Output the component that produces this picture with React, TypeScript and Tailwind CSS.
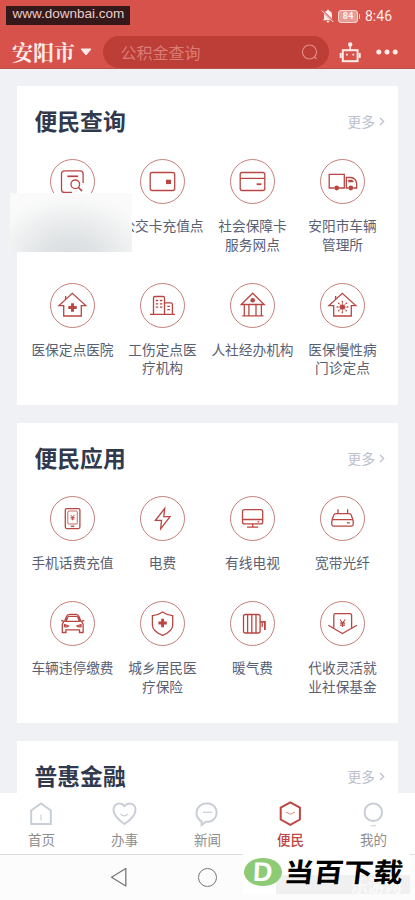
import type { ReactNode } from "react";

const House = () => (
  <path d="M13.7 22.6H9L22.3 10.3 35.8 22.6H31.3V33H13.7ZM15.6 16.5v-3.6" />
);
const Cross = ({ x, y }: { x: number; y: number }) => (
  <path d={`M${x - 4.2} ${y}h8.4M${x} ${y - 4.2}v8.4`} strokeWidth="2.9" />
);
const Yen = ({ x, y, s }: { x: number; y: number; s: number }) => (
  <g transform={`translate(${x} ${y}) scale(${s})`} strokeWidth="1.1">
    <path d="M-2.5-3.5 0-.2 2.5-3.5M0-.2V3.6M-2.4 0H2.4M-2.4 1.8H2.4" />
  </g>
);

const icons: Record<string, ReactNode> = {
  search: (
    <>
      <path d="M22 33.5h-7.5a3 3 0 0 1-3-3V14.8a3 3 0 0 1 3-3h15.600a3 3 0 0 1 3 3V24" />
      <path d="M17.300 17.300H28.200" strokeWidth="1.700" />
      <circle cx="25.300" cy="25.300" r="4.300" />
      <path d="m28.500 28.500 3.600 3.600" strokeWidth="1.600" />
    </>
  ),
  wallet: (
    <>
      <rect x="10.200" y="13.500" width="24.500" height="18" rx="2" />
      <rect x="26" y="20.700" width="5" height="4.400" fill="currentColor" stroke="none" />
    </>
  ),
  card: (
    <>
      <rect x="10.200" y="13.500" width="24.600" height="18" rx="2" />
      <path d="M10.200 19.400h24.600" />
      <path d="M26.700 25.200h4.600" strokeWidth="1.800" />
    </>
  ),
  truck: (
    <>
      <path d="M14.500 29H9.200V15.400H24.300V29H18.800M28.500 29h-2.200V18.500h4.800c3 .5 5.300 3.300 5.600 6.500v4h-3.600" />
      <path d="M28.300 21h3.800l1.500 2h-5.300Z" fill="currentColor" strokeWidth=".5" />
      <circle cx="16.700" cy="29" r="2.400" fill="currentColor" stroke="none" />
      <circle cx="30.800" cy="29" r="2.400" fill="currentColor" stroke="none" />
    </>
  ),
  hospital: (
    <>
      <House />
      <Cross x={22.5} y={24.5} />
    </>
  ),
  buildings: (
    <>
      <path d="M13.500 31V15q0-1.500 1.500-1.500h8q1.500 0 1.500 1.500V31M24.500 19.800h6.400q1.500 0 1.500 1.500V31M10 31.300H35" />
      <path d="M15.800 17.500h2.400M19.900 17.500h2.400M15.800 20.800h2.400M19.900 20.800h2.400M15.800 24.100h2.400M19.900 24.100h2.400M27.300 23.400h2.600M27.300 26.600h2.600" />
    </>
  ),
  bank: (
    <>
      <path d="M11.300 21.500 22.700 10.200 34.200 21.500ZM12.300 32.800H33.500M14.300 21.500v11.300M18.900 21.500v11.300M26 21.500v11.300M31.400 21.500v11.300" />
      <circle cx="22.700" cy="17.300" r="2.300" fill="currentColor" stroke="none" />
    </>
  ),
  virus: (
    <>
      <House />
      <circle cx="22.400" cy="24" r="2.600" fill="currentColor" stroke="none" />
      <path d="M22.400 18.800v10.400M17.300 24h10.300M18.800 20.300l7.300 7.300M26.100 20.300l-7.300 7.300" strokeWidth=".7" />
      <path d="M22.400 18.600v.1M22.400 29.300v.1M17.200 24h.1M27.700 24h.1M18.700 20.200h.1M26.200 20.200h.1M18.700 27.800h.1M26.200 27.800h.1" strokeWidth="1.500" strokeLinecap="round" />
    </>
  ),
  phone: (
    <>
      <rect x="15.300" y="12.600" width="14.600" height="20" rx="1.500" />
      <rect x="17.800" y="15" width="9.500" height="13" rx=".8" strokeWidth=".8" />
      <path d="M20.800 30.300h3.600" />
      <Yen x={22.6} y={21.5} s={0.8} />
    </>
  ),
  bolt: <path d="M24.700 12.500 15.400 24.300h6.100L20.700 32.800 30 20.600h-6.200Z" />,
  tv: (
    <>
      <rect x="12.500" y="13.700" width="20.200" height="14.200" rx="2" />
      <path d="M12.500 23.500h20.200M22.700 28v3M17 31.200h11.200" />
      <path d="M27.600 25.800h1.600" />
    </>
  ),
  router: (
    <>
      <path d="M18 13.300v4.400M27.600 13.300v4.400M12 23.800l2-5q.5-1.200 1.800-1.200h13.500q1.300 0 1.700 1.200l2 5" />
      <rect x="11.800" y="23.700" width="21.400" height="6.400" rx="1.500" />
      <path d="M27 26.800h2.800" />
    </>
  ),
  car: (
    <>
      <path d="M14.500 20.500l2-5q.8-2.100 3-2.100h6.500q2.200 0 3 2.100l2 5M11.200 19.300l2.700 1.100-1.600 2.800v8.300h3.600v-2.600h13.600v2.600h3.600v-8.300l-1.600-2.800 2.700-1.100M16 20.400h13.500l-1.500-4q-.4-1.100-1.600-1.100h-7.200q-1.200 0-1.600 1.100Z" />
      <path d="m14.500 23.700 4 1.300q-1.600 1.500-4 .6ZM31 23.700l-4 1.300q1.600 1.500 4 .6Z" />
    </>
  ),
  shield: (
    <>
      <path d="M22.600 10.900c3 2.200 6.500 3.300 10.100 3.700v9.600c0 4.400-5 8-10.100 10.200-5.100-2.200-10.200-5.800-10.200-10.200v-9.600c3.600-.4 7.200-1.500 10.200-3.700Z" />
      <Cross x={22.6} y={22} />
    </>
  ),
  heat: (
    <>
      <rect x="13.500" y="13.500" width="16.600" height="18.500" rx="2" />
      <path d="M17.600 13.500V32M21.800 13.500V32M26 13.500V32" />
      <path d="M30 20.800h4.900v8.300" strokeWidth="1.800" />
      <path d="M32.200 22v4" />
    </>
  ),
  fund: (
    <>
      <path d="M13.800 26.800V14.300q0-1.700 1.700-1.700h14.400q1.700 0 1.700 1.700v12.500M8.300 24.300l14.100 8.300 14.500-8.300" />
      <Yen x={22.6} y={22.2} s={1.05} />
    </>
  ),
};

type Item = [icon: string, ...lines: string[]];

const queries: Item[] = [
  ["search"],
  ["wallet", "公交卡充值点"],
  ["card", "社会保障卡", "服务网点"],
  ["truck", "安阳市车辆", "管理所"],
  ["hospital", "医保定点医院"],
  ["buildings", "工伤定点医", "疗机构"],
  ["bank", "人社经办机构"],
  ["virus", "医保慢性病", "门诊定点"],
];
const apps: Item[] = [
  ["phone", "手机话费充值"],
  ["bolt", "电费"],
  ["tv", "有线电视"],
  ["router", "宽带光纤"],
  ["car", "车辆违停缴费"],
  ["shield", "城乡居民医", "疗保险"],
  ["heat", "暖气费"],
  ["fund", "代收灵活就", "业社保基金"],
];

function Card({ title, items, className }: { title: string; items: Item[]; className: string }) {
  return (
    <section className={`mx-[17px] w-[381px] shrink-0 bg-white ${className}`}>
      <div className="flex h-[73px] items-center justify-between pr-[13px] pb-[2px] pl-[17.500px]">
        <h2 className="text-[22.800px] leading-none font-bold text-[#30394d]">{title}</h2>
        <div className="flex items-center gap-1 text-[13.700px] leading-none text-[#bbc0cc]">
          更多
          <svg width="6" height="9" viewBox="0 0 6 9" fill="none" stroke="currentColor" strokeWidth="1.200">
            <path d="m1 1 3.700 3.500L1 8" />
          </svg>
        </div>
      </div>
      <div className="grid grid-cols-[repeat(4,90px)] gap-y-[28.700px] pl-[10.500px]">
        {items.map(([icon, ...lines]) => (
          <div key={icon} className="flex flex-col items-center">
            <svg width="45" height="45" viewBox="0 0 45 45" fill="none" stroke="currentColor" strokeWidth="1.300" className="text-[#b84743]">
              <circle cx="22.500" cy="22.500" r="22" strokeWidth=".9" stroke="#bf716c" />
              {icons[icon]}
            </svg>
            <div className="mt-[12.200px] mb-[.8px] text-center text-[13.700px] leading-[18.500px] whitespace-nowrap text-[#586073]">
              {lines.map((l) => (
                <div key={l}>{l}</div>
              ))}
            </div>
          </div>
        ))}
      </div>
    </section>
  );
}

const tabs: { label: string; icon: ReactNode }[] = [
  {
    label: "首页",
    icon: (
      <>
        <path d="M3.200 23V9.500L13 2.500l9.800 7V23Z" />
        <path d="M13 13.500v6" strokeWidth="1.100" />
      </>
    ),
  },
  {
    label: "办事",
    icon: (
      <>
        <path d="M13.500 23C9 20 2.500 14.500 2.500 8.800 2.500 2.500 9.500.5 13.500 5c4-4.500 11-2.500 11 3.800 0 5.700-6.500 11.200-11 14.200Z" />
        <path d="M9.500 12.800q4 4.200 7.500 0" strokeWidth="1.200" />
      </>
    ),
  },
  {
    label: "新闻",
    icon: (
      <>
        <path d="M7.600 20.300C4.500 18.700 2.500 15.600 2.500 12A9.500 9.500 0 0 1 12 2.500h3A9.300 9.300 0 0 1 15 20.800h-3L7.600 24Z" />
        <path d="M9 11.300h9" strokeWidth="1.200" />
      </>
    ),
  },
  {
    label: "便民",
    icon: (
      <>
        <path d="m13.300 1.300 9.600 5.400v11.800l-9.600 5.400-9.600-5.400V6.700Z" />
        <path d="m9 11 4.400 2.200L18 11" strokeWidth=".9" opacity=".7" />
      </>
    ),
  },
  {
    label: "我的",
    icon: (
      <>
        <circle cx="13.300" cy="11.300" r="8.800" />
        <path d="M10.800 24.700h5" strokeWidth="1.100" />
      </>
    ),
  },
];

export default function App() {
  return (
    <div className="relative flex h-[900px] w-[415px] flex-col overflow-hidden bg-[#f0f1f5] font-['Noto_Sans_CJK_SC',sans-serif]">
      <header className="h-[69px] shrink-0 border-b border-[#b9514d] bg-[#d6524b] text-[#ffebe8]">
        <div className="flex h-9 items-start justify-between pl-1.5">
          <div className="mt-1.5 flex h-[19px] w-[124px] items-center bg-[#35191a] pb-[3px] pl-[6.500px] font-['Liberation_Sans',sans-serif] text-[13.500px] leading-none text-[#e9cdca]">
            www.downbai.com
          </div>
          <div className="mt-[8px] flex h-4 items-center pr-[23px]">
            <svg width="14" height="14" viewBox="0 0 14 14" className="mr-[3px]">
              <path d="M3 10V6q0-3.600 3-4.200V.8h2v1Q11 2.400 11 6v4l1.200 1.200H1.800ZM5.500 12h3q-.3 1.500-1.500 1.500T5.500 12" fill="#ffebe8" />
              <path d="m1.200 1.500 11.500 11.500" stroke="#d6524b" strokeWidth="2" />
              <path d="m.8 1.500 11.500 11.500" stroke="#ffebe8" />
            </svg>
            <div className="flex h-[13px] w-[20px] items-center justify-center rounded-[3px] border border-[#ffd8d3] bg-[#e79b95] font-['Roboto',sans-serif] text-[9.500px] leading-none font-bold">84</div>
            <div className="ml-[1px] h-[5px] w-[1px] bg-[#ffd8d3]" />
            <div className="ml-[5px] font-['Roboto',sans-serif] text-[14px] leading-none">8:46</div>
          </div>
        </div>
        <div className="flex h-8 items-center">
          <div className="ml-3 w-[63px] pb-[2px] font-['Noto_Serif_CJK_SC','Noto_Sans_CJK_SC',serif] text-[21px] leading-none font-bold whitespace-nowrap">安阳市</div>
          <svg width="12" height="8" viewBox="0 0 12 8" className="ml-[4.500px]">
            <path d="M1 1h10L6 7Z" fill="#ffebe8" stroke="#ffebe8" strokeLinejoin="round" />
          </svg>
          <div className="ml-[11px] flex h-8 w-[226px] items-center justify-between rounded-l-full rounded-r-full bg-[#bd3d37] pr-[11px] pl-[18px] text-[16px] leading-none text-[#d97c76]">
            <span className="pb-px">公积金查询</span>
            <svg width="17" height="17" viewBox="0 0 17 17" fill="none" stroke="#e5928c" strokeWidth="1.100">
              <circle cx="8.500" cy="8" r="7" />
              <path d="m13.500 13 2 2" />
            </svg>
          </div>
          <svg width="22" height="21" viewBox="0 0 22 21" fill="none" stroke="#ffebe8" className="ml-[10px]">
            <circle cx="11.200" cy="2.400" r="2.200" fill="#ffebe8" stroke="none" />
            <path d="M11.200 3v5" strokeWidth="1.500" />
            <rect x="3.800" y="8.200" width="14.800" height="11" strokeWidth="2" />
            <path d="M1.700 11v5M20.700 11v5" strokeWidth="2" />
            <path d="M7 12.700h1.800M13.400 12.700h1.800" strokeWidth="1.800" />
          </svg>
          <svg width="22" height="6" viewBox="0 0 22 6" fill="#ffebe8" className="ml-[15px]">
            <circle cx="2.800" cy="3" r="2.500" />
            <circle cx="11" cy="3" r="2.500" />
            <circle cx="19.200" cy="3" r="2.500" />
          </svg>
        </div>
      </header>

      <main className="flex min-h-0 flex-1 flex-col gap-[18px] overflow-hidden pt-[17px]">
        <Card title="便民查询" items={queries} className="h-[319px]" />
        <Card title="便民应用" items={apps} className="h-[300px]" />
        <Card title="普惠金融" items={[]} className="h-[100px]" />
      </main>

      <div className="absolute top-[193px] left-[10px] h-[59px] w-[122px] bg-[#fafafb] bg-[radial-gradient(ellipse_85px_62px_at_50%_108%,#dadddf_0%,#e0e3e5_30%,#ebedee_60%,#f5f6f6_85%,#fafafb_100%)]" />

      <nav className="flex h-[61px] shrink-0 bg-white">
        {tabs.map(({ label, icon }) => {
          const on = label === "便民";
          return (
            <div key={label} className={`flex flex-1 flex-col items-center pt-2 ${on ? "text-[#bd4642]" : "text-[#c9ced6]"}`}>
              <svg width="27" height="26" viewBox="0 0 27 26" fill="none" stroke="currentColor" strokeWidth="2">
                {icon}
              </svg>
              <span className={`mt-[5px] text-[13.500px] leading-[14px] ${on ? "font-medium" : "text-[#8e8e8e]"}`}>{label}</span>
            </div>
          );
        })}
      </nav>

      <footer className="flex h-[46px] shrink-0 items-start border-t border-[#dedede] bg-[#fcfcfc]">
        <svg width="18" height="21" viewBox="0 0 18 21" fill="none" stroke="#777" strokeWidth="1.300" className="mt-[12px] ml-[110px]">
          <path d="M15.800 1.500v17.500L1.500 10.300Z" strokeLinejoin="round" />
        </svg>
        <div className="mt-[13px] ml-[70px] size-[19px] rounded-full border border-[#777]" />
      </footer>

      <div className="absolute top-[854px] left-[243px] flex h-[40px] w-[167px] items-start bg-white">
        <div className="absolute right-0 bottom-0 flex h-[19px] w-[134px] items-end justify-end bg-[#f0f0f0] pr-2 text-[17px] leading-[18px] font-bold text-[#fafafa]">
          乐游网
        </div>
        <div className="relative mt-[4px] ml-[1px] flex h-[28px] w-[38px] shrink-0 items-center justify-center rounded-[50%] bg-[#8dcb76] font-['Liberation_Sans',sans-serif] text-[27px] leading-none font-bold text-white">
          <span className="-skew-x-3">D</span>
        </div>
        <div className="relative mt-[4px] ml-[4px] h-[26px] w-[120px] shrink-0 text-[26.500px] leading-[26px] font-bold whitespace-nowrap text-black">
          <div className="origin-top-left scale-x-112 -skew-x-6">当百下载</div>
        </div>
      </div>
    </div>
  );
}
